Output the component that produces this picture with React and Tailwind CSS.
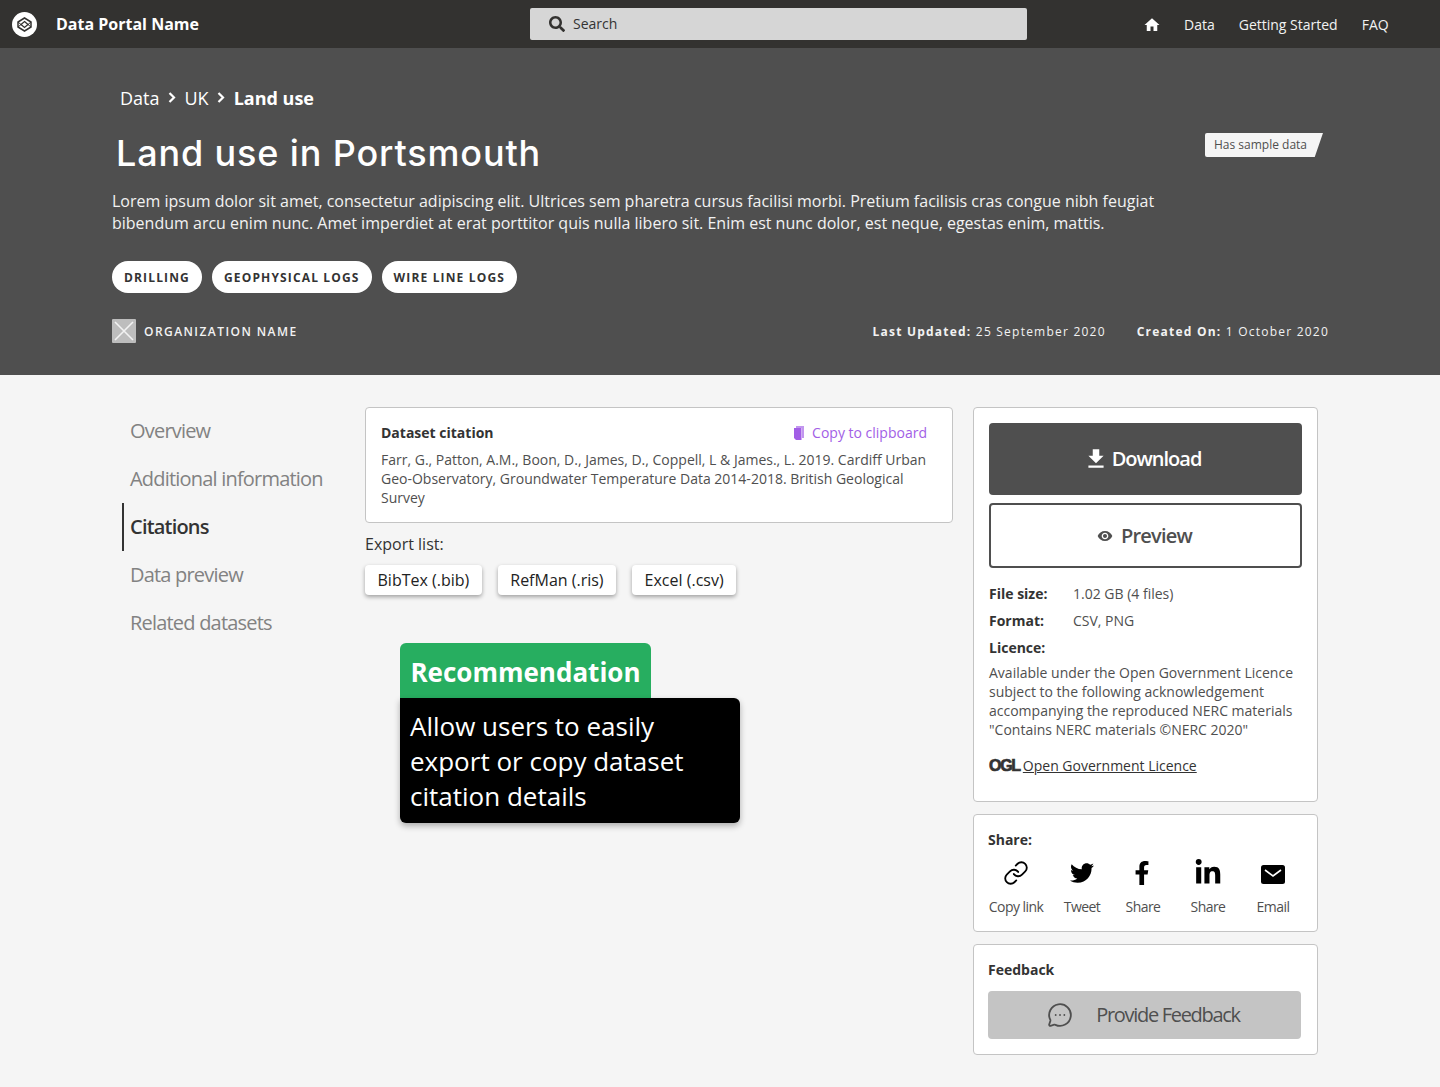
import { Link, MessageCircleMore } from "lucide-react";
import { FaSearch, FaTwitter, FaFacebookF, FaLinkedinIn } from "react-icons/fa";
import { MdFileDownload, MdHome, MdVisibility } from "react-icons/md";

const sideItems = ["Overview", "Additional information", "Citations", "Data preview", "Related datasets"];
const tags = ["DRILLING", "GEOPHYSICAL LOGS", "WIRE LINE LOGS"];
const exportsList = ["BibTex (.bib)", "RefMan (.ris)", "Excel (.csv)"];

const Logo = () => (
  <svg width="25" height="25" viewBox="0 0 25 25">
    <circle cx="12.5" cy="12.5" r="12.5" fill="#fff" />
    <path d="M12.5 6 19 10v5l-6.5 4L6 15v-5Z" fill="none" stroke="#333230" strokeWidth="1.5" />
    <path d="M12.5 9.5 16 12.5 12.5 15.5 9 12.5Z" fill="none" stroke="#333230" strokeWidth="1.3" />
    <path d="M6 10l3 2.5M19 10l-3 2.5M6 15l3-2.5M19 15l-3-2.5" stroke="#333230" strokeWidth="1" />
  </svg>
);

const Chevron = () => (
  <svg width="8" height="11" viewBox="0 0 8 11" className="mx-[8.5px]">
    <path d="M1.5 1 6 5.5 1.5 10" fill="none" stroke="#fff" strokeWidth="2.2" />
  </svg>
);

const CopyIcon = () => (
  <svg width="12" height="14" viewBox="0 0 12 14" fill="#a25ee6">
    <path d="M3 0h8v12H9V2H3Z" opacity="0.65" />
    <path d="M1 2h7.5v12H3L1 12Z" />
  </svg>
);

const MailIcon = () => (
  <svg width="24" height="19" viewBox="0 0 24 19" className="mt-[2px]">
    <rect x="0" y="0" width="24" height="19" rx="2.5" fill="#000" />
    <path d="M4 5l8 6 8-6" fill="none" stroke="#fff" strokeWidth="1.6" />
  </svg>
);

const BrokenImage = () => (
  <div className="-mt-[2px] flex h-6 w-6 items-center justify-center rounded-[1px] bg-[#bdbdbd]">
    <svg width="24" height="24" viewBox="0 0 24 24">
      <path d="M3 3l18 18M21 3 3 21" stroke="#f2f2f2" strokeWidth="1.6" />
    </svg>
  </div>
);

const ShareItem = ({ icon, label, className }) => (
  <div className={`flex flex-col items-center ${className}`}>
    <div className="flex h-[34px] items-center justify-center text-black">{icon}</div>
    <span className="mt-[7px] text-sm leading-[19px] tracking-[-0.04em] text-[#4f4f4f]">{label}</span>
  </div>
);

export default function App() {
  return (
    <div className="min-h-[1087px] bg-[#f5f5f5] font-['Open_Sans',sans-serif] text-[#4f4f4f]">
      {/* Top bar */}
      <header className="flex h-12 items-center bg-[#333230] pl-3 text-white">
        <Logo />
        <span className="ml-[19px] w-[474px] text-base font-bold">Data Portal Name</span>
        <div className="flex h-8 w-[497px] items-center gap-[8px] rounded-[2px] bg-[#d6d6d6] pl-[19px] text-[#333]">
          <FaSearch className="h-4 w-4 text-[#333230]" />
          <span className="text-sm">Search</span>
        </div>
        <nav className="ml-[116px] flex items-center pt-[2px] text-sm text-[#f2f2f2]">
          <MdHome className="mr-[23px] h-[18px] w-[18px] text-white" />
          <span className="mr-[24px]">Data</span>
          <span className="mr-[24px]">Getting Started</span>
          <span>FAQ</span>
        </nav>
      </header>

      {/* Hero */}
      <section className="h-[327px] bg-[#4f4f4f] pl-[112px] pr-[111px] pt-[36px] text-white">
        <div className="flex items-start justify-between">
          <div>
            <div className="ml-2 flex h-[27px] items-center text-lg">
              <span className="font-normal">Data</span>
              <Chevron />
              <span className="font-normal">UK</span>
              <Chevron />
              <span className="font-bold">Land use</span>
            </div>
            <h1 className="ml-1 mt-[20px] font-['Inter',sans-serif] text-[36px] font-medium leading-[44px] tracking-[0.86px]">Land use in Portsmouth</h1>
            <p className="mt-[15px] w-[1060px] text-base leading-[22px] text-[#f2f2f2]">
              Lorem ipsum dolor sit amet, consectetur adipiscing elit. Ultrices sem pharetra cursus facilisi morbi. Pretium facilisis cras congue nibh feugiat bibendum arcu enim nunc. Amet imperdiet at erat porttitor quis nulla libero sit. Enim est nunc dolor, est neque, egestas enim, mattis.
            </p>
          </div>
          <div className="mr-[6px] mt-[49px] flex h-6 w-[118px] items-center rounded-l-[2px] bg-[#f5f5f5] pl-[9px] text-xs text-[#4f4f4f] [clip-path:polygon(0_0,100%_0,93%_100%,0_100%)]">
            Has sample data
          </div>
        </div>
        <div className="mt-[27px] flex gap-[10px]">
          {tags.map((t) => (
            <span key={t} className="flex h-8 items-center rounded-full bg-white px-3 pt-px text-xs font-bold tracking-[1.15px] text-[#333]">
              {t}
            </span>
          ))}
        </div>
        <div className="mt-[28px] flex items-center justify-between text-xs">
          <div className="flex items-center gap-2">
            <BrokenImage />
            <span className="font-semibold tracking-[1.44px] text-[#f2f2f2]">ORGANIZATION NAME</span>
          </div>
          <div className="flex gap-[31px] tracking-[1.22px] text-[#f2f2f2]">
            <span><b className="font-bold">Last Updated:</b> 25 September 2020</span>
            <span><b className="font-bold">Created On:</b> 1 October 2020</span>
          </div>
        </div>
      </section>

      {/* Body */}
      <main className="flex pl-[122px] pt-8">
        <aside className="w-[243px]">
          {sideItems.map((item) => (
            <div
              key={item}
              className={`flex h-12 items-center pl-[6px] text-[20px] tracking-[-0.04em] ${
                item === "Citations"
                  ? "border-l-2 border-[#333] font-semibold text-[#333]"
                  : "border-l-2 border-transparent font-normal text-[#828282]"
              }`}
            >
              {item}
            </div>
          ))}
        </aside>

        <div className="w-[588px]">
          <div className="h-[116px] rounded-[4px] border border-[#c4c4c4] bg-white px-[15px] pt-[15px]">
            <div className="flex items-center justify-between pr-[10px]">
              <span className="text-sm font-bold leading-[19px] text-[#333]">Dataset citation</span>
              <span className="flex items-center gap-[7px] text-sm leading-[19px] text-[#a25ee6]">
                <CopyIcon />
                Copy to clipboard
              </span>
            </div>
            <p className="mt-2 text-sm leading-[19px] text-[#4f4f4f]">
              Farr, G., Patton, A.M., Boon, D., James, D., Coppell, L &amp; James., L. 2019. Cardiff Urban Geo-Observatory, Groundwater Temperature Data 2014-2018. British Geological Survey
            </p>
          </div>
          <div className="mt-[10px] text-base leading-[22px] text-[#333]">Export list:</div>
          <div className="mt-[10px] flex gap-4">
            {exportsList.map((e) => (
              <span key={e} className="flex h-[30px] items-center rounded-[4px] bg-white px-[12.5px] text-base text-[#222] shadow-[0_2px_4px_rgba(0,0,0,0.35)]">
                {e}
              </span>
            ))}
          </div>

          <div className="ml-[35px] mt-[48px] w-[340px]">
            <div className="flex h-[55px] w-[251px] items-center justify-center rounded-t-[6px] bg-[#27ae60] pt-1 text-[26px] font-bold text-white">
              Recommendation
            </div>
            <div className="h-[125px] rounded-[6px] rounded-tl-none bg-black px-[10px] pt-[11px] text-[26px] leading-[35px] text-white shadow-[0_3px_6px_rgba(0,0,0,0.3)]">
              Allow users to easily export or copy dataset citation details
            </div>
          </div>
        </div>

        <div className="ml-5 w-[345px]">
          <div className="h-[395px] rounded-[4px] border border-[#c4c4c4] bg-white px-[15px] pt-[15px]">
            <div className="flex h-[72px] items-center justify-center gap-[3px] rounded-[4px] bg-[#4f4f4f] pr-[7px] text-[20px] font-semibold tracking-[-0.05em] text-white">
              <MdFileDownload className="h-[26px] w-[26px]" />
              Download
            </div>
            <div className="mt-2 flex h-[65px] items-center justify-center gap-2 rounded-[4px] border-2 border-[#4f4f4f] pr-[2px] text-[20px] font-semibold tracking-[-0.04em] text-[#4f4f4f]">
              <MdVisibility className="h-4 w-4" />
              Preview
            </div>
            <div className="mt-4 flex text-sm leading-[19px]">
              <b className="w-[84px] font-bold text-[#333]">File size:</b>
              <span>1.02 GB (4 files)</span>
            </div>
            <div className="mt-2 flex text-sm leading-[19px]">
              <b className="w-[84px] font-bold text-[#333]">Format:</b>
              <span>CSV, PNG</span>
            </div>
            <div className="mt-2 text-sm font-bold leading-[19px] text-[#333]">Licence:</div>
            <p className="mt-[6px] text-sm leading-[19px]">
              Available under the Open Government Licence subject to the following acknowledgement accompanying the reproduced NERC materials "Contains NERC materials ©NERC 2020"
            </p>
            <div className="mt-[17px] flex items-center gap-[3px] text-sm leading-[19px] text-[#333]">
              <span className="font-['Liberation_Sans',sans-serif] text-[16px] font-bold tracking-[-0.08em] text-[#333] [-webkit-text-stroke:0.7px_#333]">OGL</span>
              <span className="underline">Open Government Licence</span>
            </div>
          </div>

          <div className="mt-3 h-[118px] rounded-[4px] border border-[#c4c4c4] bg-white pl-[14px] pt-[15px]">
            <div className="text-sm font-bold leading-[19px] text-[#333]">Share:</div>
            <div className="mt-[7px] flex">
              <ShareItem icon={<Link className="h-[26px] w-[26px]" strokeWidth={1.7} />} label="Copy link" className="w-[56px]" />
              <ShareItem icon={<FaTwitter className="h-6 w-6" />} label="Tweet" className="ml-[10px] w-[56px]" />
              <ShareItem icon={<FaFacebookF className="mr-[3px] h-6 w-6" />} label="Share" className="ml-[5px] w-[56px]" />
              <ShareItem icon={<FaLinkedinIn className="h-7 w-7" />} label="Share" className="ml-[9px] w-[56px]" />
              <ShareItem icon={<MailIcon />} label="Email" className="ml-[9px] w-[56px]" />
            </div>
          </div>

          <div className="mt-3 h-[111px] rounded-[4px] border border-[#c4c4c4] bg-white pl-[14px] pr-[16px] pt-[15px]">
            <div className="text-sm font-bold leading-[19px] text-[#333]">Feedback</div>
            <div className="mt-3 flex h-12 items-center justify-center gap-[23px] rounded-[4px] bg-[#c4c4c4] pr-[2px] text-[20px] font-normal tracking-[-0.065em] text-[#4f4f4f]">
              <MessageCircleMore className="h-[26px] w-[26px] text-[#4f4f4f]" strokeWidth={1.7} />
              Provide Feedback
            </div>
          </div>
        </div>
      </main>
    </div>
  );
}
